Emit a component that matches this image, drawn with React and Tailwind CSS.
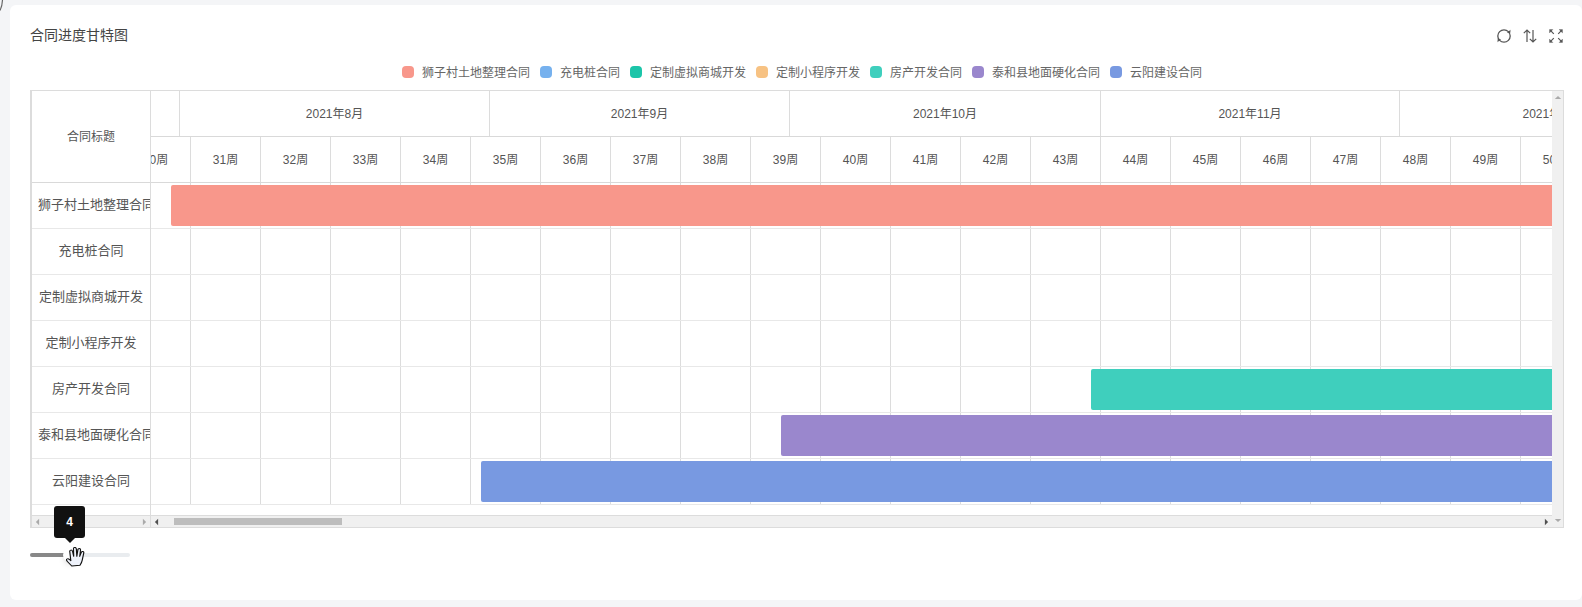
import React from 'react';

const FONT = "font-['Liberation_Sans','Noto_Sans_CJK_SC',sans-serif]";

const legend = [
  { name: '狮子村土地整理合同', color: 'bg-[#f8978b]' },
  { name: '充电桩合同', color: 'bg-[#76b1ee]' },
  { name: '定制虚拟商城开发', color: 'bg-[#1cc5a9]' },
  { name: '定制小程序开发', color: 'bg-[#f7c283]' },
  { name: '房产开发合同', color: 'bg-[#3fcfbd]' },
  { name: '泰和县地面硬化合同', color: 'bg-[#9a87cd]' },
  { name: '云阳建设合同', color: 'bg-[#7899e1]' },
];

const rows = [
  { label: '狮子村土地整理合同', overflow: true, bar: 'bg-[#f8978b] left-[50px]' },
  { label: '充电桩合同' },
  { label: '定制虚拟商城开发' },
  { label: '定制小程序开发' },
  { label: '房产开发合同', bar: 'bg-[#3fcfbd] left-[970px]' },
  { label: '泰和县地面硬化合同', overflow: true, bar: 'bg-[#9a87cd] left-[660px]' },
  { label: '云阳建设合同', bar: 'bg-[#7899e1] left-[360px]' },
];

const months = [
  { name: '', width: 'w-[59px]' },
  { name: '2021年8月', width: 'w-[310px]' },
  { name: '2021年9月', width: 'w-[300px]' },
  { name: '2021年10月', width: 'w-[311px]' },
  { name: '2021年11月', width: 'w-[299px]' },
  { name: '2021年12月', width: 'w-[310px]' },
];

const weeks = Array.from({ length: 22 }, (_, i) => 30 + i);

const Arrow = ({ dir, className }) => {
  const points = {
    left: '5,1 5,9 1,5',
    right: '1,1 1,9 5,5',
    up: '1,5 9,5 5,1',
    down: '1,1 9,1 5,5',
  };
  const box = dir === 'left' || dir === 'right' ? '0 0 6 10' : '0 0 10 6';
  return (
    <svg viewBox={box} className={className}>
      <polygon points={points[dir]} fill="currentColor" />
    </svg>
  );
};

const RefreshIcon = () => (
  <svg viewBox="0 0 16 16" className="h-4 w-4 text-[#555]" fill="none" stroke="currentColor" strokeWidth="1.3">
    <circle cx="8" cy="8" r="6.2" />
    <path d="M14.4 2.2 14 5.2 11.2 4.4z" fill="currentColor" strokeWidth="0.3" />
    <path d="M1.6 13.8 2 10.8 4.8 11.6z" fill="currentColor" strokeWidth="0.3" />
  </svg>
);

const SortIcon = () => (
  <svg viewBox="0 0 16 16" className="h-4 w-4 text-[#555]" fill="none" stroke="currentColor" strokeWidth="1.2">
    <path d="M5 14V2M1.8 5.2 5 2l3.2 3.2" />
    <path d="M11 2v12M7.8 10.8 11 14l3.2-3.2" />
  </svg>
);

const ExpandIcon = () => (
  <svg viewBox="0 0 16 16" className="h-4 w-4 text-[#555]" fill="currentColor" stroke="currentColor" strokeWidth="1.2">
    <path d="M5.8 5.8 2.6 2.6M10.2 5.8l3.2-3.2M5.8 10.2l-3.2 3.2M10.2 10.2l3.2 3.2" />
    <path d="M1.5 1.5h3.4L1.5 4.9zM14.5 1.5h-3.4l3.4 3.4zM1.5 14.5h3.4l-3.4-3.4zM14.5 14.5h-3.4l3.4-3.4z" strokeWidth="0.3" />
  </svg>
);

const HandCursor = () => (
  <svg viewBox="1 1 16.5 20.5" preserveAspectRatio="none" className="absolute left-[36px] top-[-6px] h-[20px] w-[19px]">
    <path
      d="M6 20.5 2.2 15.8c-.9-1.1-1-2-.4-2.5.7-.6 1.6-.2 2.4.7l1 1.1L4.3 6c-.2-1 .2-1.7 .9-1.8.8-.1 1.3.4 1.5 1.4l1 5L7.5 3c0-1 .4-1.6 1.2-1.6S9.9 2 10 3l.4 7.6.9-6.6c.1-1 .6-1.5 1.3-1.4.8.1 1.1.7 1 1.7l-.7 6.4 1.3-4c.3-.9.8-1.3 1.5-1.1.7.2.9.8.7 1.7l-1.3 7.2c-.3 1.8-.8 3-1.6 4.4-.2.4-.3.6-.3.9z"
      fill="#eef2fb"
      stroke="#111"
      strokeWidth="1"
      strokeLinejoin="round"
    />
  </svg>
);

const App = () => {
  return (
    <div className={`relative h-[607px] w-[1582px] overflow-hidden bg-[#f4f5f7] pt-[5px] pl-[10px] ${FONT}`}>
      {/* corner remnant */}
      <svg viewBox="0 0 4 11" className="absolute left-0 top-0 h-[11px] w-[4px] text-[#666]">
        <path d="M2.5 0C2.3 4 1.5 7.5 0 10.5" fill="none" stroke="currentColor" strokeWidth="1.2" />
      </svg>

      <div className="h-[595px] w-[1572px] rounded-md bg-white pt-[20px] pl-[20px]">
        {/* Title and tools */}
        <div className="flex h-[20px] w-[1534px] items-center justify-between">
          <span className="text-sm leading-5 text-[#444]">合同进度甘特图</span>
          <div className="flex translate-y-px items-center gap-2.5 text-[#555]">
            <RefreshIcon />
            <SortIcon />
            <ExpandIcon />
          </div>
        </div>

        {/* Legend */}
        <div className="mt-[19px] flex h-4 w-[1534px] items-center justify-center gap-2.5 pl-[10px]">
          {legend.map((item) => (
            <div key={item.name} className="flex items-center gap-2">
              <span className={`h-3 w-3 rounded ${item.color}`} />
              <span className="translate-y-px text-xs leading-4 text-[#666]">{item.name}</span>
            </div>
          ))}
        </div>

        {/* Gantt table */}
        <div className="mt-2.5 flex h-[438px] w-[1534px] border border-l-2 border-[#dcdcdc]">
          {/* Title column */}
          <div className="flex w-[119px] shrink-0 flex-col border-r border-[#dcdcdc]">
            <div className="flex h-[92px] shrink-0 items-center justify-center border-b border-[#d9d9d9] text-xs text-[#555]">
              合同标题
            </div>
            {rows.map((row) => (
              <div
                key={row.label}
                className={`flex h-[46px] shrink-0 items-center overflow-hidden border-b border-[#e8e8e8] pb-[2px] text-[13px] whitespace-nowrap text-[#555] ${
                  row.overflow ? 'pl-[6px]' : 'justify-center'
                }`}
              >
                {row.label}
              </div>
            ))}
            <div className="flex-1" />
            <div className="flex h-3 shrink-0 items-center justify-between border-t border-[#dcdcdc] bg-[#f0f0f0] px-[3px] text-[#aaa]">
              <Arrow dir="left" className="h-2 w-[5px]" />
              <Arrow dir="right" className="h-2 w-[5px]" />
            </div>
          </div>

          {/* Chart area */}
          <div className="flex min-w-0 flex-1">
            <div className="flex min-w-0 flex-1 flex-col">
              <div className="min-h-0 flex-1 overflow-hidden">
                <div className="ml-[-30px] w-[1540px]">
                  <div className="flex h-[46px] border-b border-[#d9d9d9]">
                    {months.map((month) => (
                      <div
                        key={month.name}
                        className={`flex shrink-0 items-center justify-center border-r border-[#dcdcdc] text-xs text-[#555] ${month.width}`}
                      >
                        {month.name}
                      </div>
                    ))}
                  </div>
                  <div className="flex h-[46px] border-b border-[#d9d9d9]">
                    {weeks.map((week) => (
                      <div
                        key={week}
                        className="flex w-[70px] shrink-0 items-center justify-center border-r border-[#dcdcdc] text-xs text-[#555]"
                      >
                        {week}周
                      </div>
                    ))}
                  </div>
                  {rows.map((row) => (
                    <div key={row.label} className="relative flex h-[46px] border-b border-[#e8e8e8]">
                      {weeks.map((week) => (
                        <div key={week} className="w-[70px] shrink-0 border-r border-[#dcdcdc]" />
                      ))}
                      {row.bar && (
                        <div className={`absolute top-[2px] right-0 z-10 h-[41px] rounded-[2px] ${row.bar}`} />
                      )}
                    </div>
                  ))}
                </div>
              </div>
              {/* Horizontal scrollbar */}
              <div className="flex h-3 shrink-0 items-center border-t border-[#dcdcdc] bg-[#f0f0f0] pr-[3px] pl-[3px]">
                <Arrow dir="left" className="h-2 w-[5px] shrink-0 text-[#505050]" />
                <div className="ml-[15px] h-[7px] w-[168px] shrink-0 bg-[#bdbdbd]" />
                <div className="flex-1" />
                <Arrow dir="right" className="h-2 w-[5px] shrink-0 text-[#505050]" />
              </div>
            </div>

            {/* Vertical scrollbar */}
            <div className="flex w-[11px] shrink-0 flex-col items-center justify-between bg-[#f0f0f0] pt-1 pb-1 text-[#aaa]">
              <Arrow dir="up" className="h-[5px] w-2" />
              <Arrow dir="down" className="h-[5px] w-2" />
            </div>
          </div>
        </div>

        {/* Zoom slider */}
        <div className="relative mt-[25px] h-1 w-[100px] rounded-full bg-[#e9ecef]">
          <div className="h-1 w-[40px] rounded-full bg-[#888]" />
          <div className="absolute top-[-5px] left-[33px] h-[14px] w-[14px] rounded-full bg-white shadow-md" />
          <div className="absolute top-[-47px] left-[24px] flex h-8 w-[31px] items-center justify-center rounded-[3px] bg-[#111] text-xs font-bold text-white">
            4
          </div>
          <div className="absolute top-[-15px] left-[35px] h-0 w-0 border-x-[5px] border-t-[5px] border-x-transparent border-t-[#111]" />
          <HandCursor />
        </div>
      </div>
    </div>
  );
};

export default App;
